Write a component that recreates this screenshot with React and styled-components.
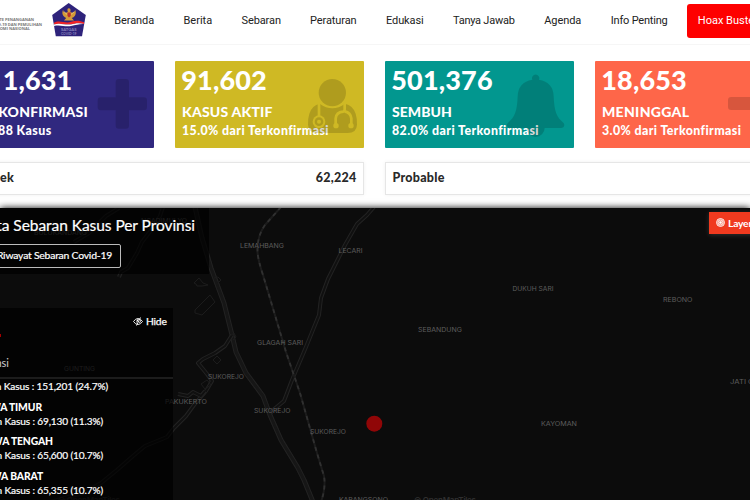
import React from "react";
import styled, { createGlobalStyle } from "styled-components";

const Global = createGlobalStyle`
  *, *::before, *::after { box-sizing: border-box; }
  html, body { margin: 0; padding: 0; }
  body { width: 750px; height: 500px; overflow: hidden; background: #fff; font-family: Lato, sans-serif; }
`;

const Page = styled.div`
  width: 750px;
  height: 500px;
  display: flex;
  flex-direction: column;
  overflow: hidden;
`;

/* Header */
const Header = styled.header`
  display: flex;
  align-items: flex-start;
  flex: none;
  height: 45px;
  border-bottom: 1px solid #f6f6f6;
`;
const BrandText = styled.div`
  flex: none;
  width: 43px;
  padding-top: 18px;
  display: flex;
  flex-direction: column;
  align-items: flex-start;
  font: 700 4px/4.5px "Open Sans", sans-serif;
  color: #777;
  white-space: nowrap;
`;
const BrandLine = styled.span`
  display: flex;
  justify-content: flex-end;
  width: ${(p) => p.$end}px;
`;
const Emblem = styled.svg`
  display: block;
  flex: none;
  width: 36px;
  height: 35px;
  margin: 2px 0 0 8px;
`;
const Nav = styled.nav`
  display: flex;
  flex: none;
  margin-left: 27.3px;
  height: 42px;
  align-items: center;
  font: 400 11px/14px Roboto, sans-serif;
  color: #222;
`;
const NavLink = styled.a`
  flex: none;
  width: ${(p) => p.$w}px;
  white-space: nowrap;
  letter-spacing: ${(p) => p.$ls || 0}px;
`;
const HoaxButton = styled.a`
  flex: none;
  width: 84px;
  height: 34px;
  margin-top: 4px;
  padding-left: 11px;
  border-radius: 3px;
  background: #fe0000;
  color: #fff;
  font: 400 11px/33px Roboto, sans-serif;
  white-space: nowrap;
`;

/* Statistics */
const Stats = styled.section`
  flex: none;
  width: 819px;
  height: 163px;
  margin-left: -35px;
  padding-top: 16px;
  display: flex;
  flex-direction: column;
  gap: 14px;
`;
const CardRow = styled.div`
  display: grid;
  grid-template-columns: repeat(4, 189px);
  gap: 21px;
`;
const Card = styled.article`
  position: relative;
  height: 87px;
  padding: 4px 0 0 7px;
  border-radius: 1px;
  background: ${(p) => p.$bg};
  color: #fff;
  font-weight: 900;
  white-space: nowrap;
`;
const Value = styled.div`
  margin-left: ${(p) => p.$shift || -0.7}px;
  font-size: 27px;
  line-height: 30px;
  letter-spacing: 0.15px;
`;
const Lead = styled.span`
  margin-right: 4px;
`;
const Label = styled.div`
  margin-top: 8px;
  font-size: 14px;
  line-height: 17px;
  letter-spacing: ${(p) => p.$ls || 0.2}px;
`;
const Share = styled.div`
  margin-top: 2px;
  font-size: 12.4px;
  line-height: 17px;
  letter-spacing: ${(p) => p.$ls || 0.4}px;
`;
const CardIcon = styled.svg`
  position: absolute;
  left: ${(p) => p.$x}px;
  top: ${(p) => p.$y}px;
  opacity: 0.15;
`;
const SummaryRow = styled.div`
  display: grid;
  grid-template-columns: repeat(2, 399px);
  gap: 21px;
`;
const Summary = styled.div`
  display: flex;
  justify-content: space-between;
  height: 33px;
  padding: 0 6.5px;
  border: 1px solid #e6e6e6;
  box-shadow: 0 0 4px rgba(0, 0, 0, 0.06);
  font-size: 12.5px;
  font-weight: 900;
  line-height: 29px;
  letter-spacing: 0.25px;
  color: #292929;
`;

/* Map */
const MapArea = styled.section`
  position: relative;
  flex: 1;
  background: #0c0c0c;
  box-shadow: 0 0 7px #000;
`;
const MapDrawing = styled.svg`
  position: absolute;
  inset: 0;
`;
const TitlePanel = styled.div`
  position: absolute;
  left: 0;
  top: 0;
  width: 209px;
  height: 66px;
  padding-top: 6px;
  background: rgba(0, 0, 0, 0.7);
  color: #fff;
`;
const EndRun = styled.div`
  display: flex;
  justify-content: flex-end;
  width: ${(p) => p.$end}px;
  white-space: nowrap;
`;
const Title = styled(EndRun)`
  font-size: 15.5px;
  line-height: 22px;
  letter-spacing: -0.05px;
  -webkit-text-stroke: 0.2px #fff;
`;
const HistoryButton = styled.button`
  display: flex;
  justify-content: flex-end;
  align-items: center;
  width: 151px;
  height: 24px;
  margin: 8px 0 0 -30px;
  padding: 0 8px 2px 0;
  border: 1px solid #bbb;
  border-radius: 2px;
  background: none;
  color: #fff;
  font: 400 10.4px/20px Lato, sans-serif;
  letter-spacing: -0.22px;
  white-space: nowrap;
  -webkit-text-stroke: 0.2px #fff;
`;
const ListPanel = styled.aside`
  position: absolute;
  left: 0;
  top: 100px;
  width: 173px;
  height: 192px;
  background: rgba(0, 0, 0, 0.7);
  color: #fff;
  overflow: hidden;
`;
const HideButton = styled.div`
  display: flex;
  align-items: center;
  gap: 3px;
  height: 14px;
  margin: 6px 0 0 133px;
  font-size: 10.3px;
  line-height: 14px;
  letter-spacing: -0.2px;
  -webkit-text-stroke: 0.25px #fff;
`;
const RedMark = styled.div`
  width: 1px;
  height: 3px;
  margin-top: 6px;
  background: #a50000;
`;
const ListHead = styled(EndRun)`
  height: 16px;
  margin-top: 18px;
  font-size: 11px;
  line-height: 16px;
  color: #ccc;
`;
const Rule = styled.div`
  height: 2px;
  margin-top: 6px;
  background: #1c1c1c;
`;
const Cases = styled(EndRun)`
  font-size: 10.1px;
  line-height: 14px;
  letter-spacing: -0.13px;
  -webkit-text-stroke: 0.2px #fff;
`;
const Province = styled(EndRun)`
  margin-top: 6.7px;
  font-size: 10.3px;
  font-weight: 900;
  line-height: 14px;
  letter-spacing: -0.1px;
`;
const LayerButton = styled.div`
  position: absolute;
  left: 709px;
  top: 4px;
  width: 60px;
  height: 22px;
  padding: 0 0 1px 7px;
  display: flex;
  align-items: center;
  gap: 3px;
  background: #f03a1f;
  box-shadow: 0 1px 5px rgba(255, 255, 255, 0.15);
  color: #fff;
  font-size: 10.3px;
  font-weight: 700;
  letter-spacing: -0.2px;
`;

const NAV = [
  ["Beranda", 69.2, -0.1],
  ["Berita", 58, 0],
  ["Sebaran", 68.5, -0.1],
  ["Peraturan", 76, -0.1],
  ["Edukasi", 67, -0.1],
  ["Tanya Jawab", 91.3, -0.25],
  ["Agenda", 66.5, -0.1],
  ["Info Penting", 76, -0.2],
];

/* [text, left, baseline, width] */
const PLACES = [
  ["LEMAHBANG", 240, 40, 44],
  ["LECARI", 338.5, 45, 24],
  ["DUKUH SARI", 512.5, 83, 41],
  ["REBONO", 663, 94, 29.5],
  ["GLAGAH SARI", 257, 136.5, 46],
  ["SEBANDUNG", 418, 123.5, 44],
  ["SUKOREJO", 208, 171, 36],
  ["PAKUKERTO", 165, 195.5, 42],
  ["SUKOREJO", 254, 205, 36.5],
  ["SUKOREJO", 310, 226, 36],
  ["KAYOMAN", 541, 218, 36],
  ["JATI GUNTING", 730, 176, 54],
  ["KARANGSONO", 339, 294, 49],
  ["GUNTING", 64, 162.5, 31],
  ["BULUKANDANG", 34, 27, 53],
  ["NGADIMULYO", 141, 15, 46],
];

const ROADS = [
  "M374 -1L367 7L357 16L345 37L328 71L321 90L319 107L306 139L292 172L284 193L273 202L269 207",
  "M195 -1L202 30L211 60L224 95L232 127L236 144L246 165L263 188L270 207L281 232L298 260L304 272L313 294",
  "M232 127L225 138L215 145L203 151L198 155L207 166L212 173L206 183L194 197L186 208L174 220L167 229L145 238L133 248L117 262L101 275L83 285L68 289L50 294",
  "M119 69L121 64L128 60L137 45L142 34L152 21L160 8L163 -1",
  "M74 34L89 25L106 8L119 0",
  "M178 186L188 188L193 184L201 188L205 183",
];
const OUTLINES = [
  "M195 102L210 87L215 94L202 107L195 105Z",
  "M194 75L199 70L203 75L208 77L202 78L197 78L196 76Z",
  "M213 152L217 148L221 152L217 156Z",
  "M201 176L207 172L211 177L205 181Z",
  "M230 128L234 125L236 129L233 132",
  "M214 70L218 69L221 72L218 75",
];
const RAILWAY =
  "M281 -1L265 17Q257 28 257.5 44Q258 52 263 67L286 144L300 185L317 245L324 268Q326 280 321 294";

function UserMd() {
  return (
    <CardIcon $x={132} $y={17} width="51" height="56" viewBox="171 84 153 168">
      <mask id="stethoscope">
        <rect x="171" y="84" width="153" height="168" fill="#fff" />
        <g fill="none" stroke="#000" strokeWidth="8">
          <path d="M207 156V203" />
          <path d="M284 156V178Q284 184 279 185Q259 187 257 205V224" />
          <path d="M284 184Q302 188 304 205V224" />
        </g>
        <circle cx="207" cy="215" r="19" fill="#000" />
        <circle cx="207" cy="215" r="13" fill="#fff" />
        <circle cx="207" cy="215" r="6" fill="#000" />
        <circle cx="258" cy="227" r="8" fill="#000" />
        <circle cx="303" cy="227" r="8" fill="#000" />
      </mask>
      <g mask="url(#stethoscope)">
        <circle cx="247" cy="128" r="41" />
        <path d="M209 161Q247 188 285 161Q309 166 317 191Q322 207 321 224Q320 249 293 249H202Q175 249 174 224Q173 207 178 191Q186 166 209 161Z" />
      </g>
    </CardIcon>
  );
}

function Bell() {
  return (
    <CardIcon $x={121} $y={13} width="60" height="64" viewBox="18 72 180 192">
      <path d="M97 89A11 11 0 1 1 117 89Q160 97 161 139C163 186 170 202 190 218C196 224 192 234 183 234H134A27 27 0 0 1 80 234H31C21 234 17 224 24 218C44 202 51 186 53 139Q54 97 97 89Z" />
    </CardIcon>
  );
}

function Garuda() {
  return (
    <Emblem viewBox="0 0 36 35">
      <path d="M17.7 1L1.2 13L4.8 34.2H31L34.8 13Z" fill="#2e237b" />
      <path d="M18 6.2Q16.3 6 16.4 8L16.8 10Q12.5 12 12 7.8Q10 13 13.8 15.2L15.2 16L13 18.5H23L20.8 16L22.5 15.2Q26 12.5 24.2 7.8Q23.4 12 19.3 10L19.6 8Q19.4 6.2 18 6.2Z" fill="#d49a38" />
      <path d="M13 9.7L16 12.4M23.3 9.7L20 12.4" stroke="#f4d77d" strokeWidth=".8" />
      <path d="M16.5 10.5H19.7V14L18 15.5L16.5 14Z" fill="#b92d2d" />
      <path d="M3 20.8C8 17.5 15 22 20 19.8C25 18 29 18.5 33 20.2V22C27 20.5 24 21.8 20 22.4C14 23.4 9 20.4 3 22.6Z" fill="#ef2428" />
      <path d="M3 22.6C9 20.4 14 23.4 20 22.4C24 21.8 27 20.5 33 22C28 21.8 25 23 20 24.1C14 25.2 9 22.3 3 24Z" fill="#fff" />
      <text x="10" y="29.4" fontFamily="Lato, sans-serif" fontSize="3.4" fontWeight="700" textLength="15.5" lengthAdjust="spacingAndGlyphs" fill="#8d86bb">SATGAS</text>
      <text x="10" y="32.6" fontFamily="Lato, sans-serif" fontSize="3.2" fontWeight="700" textLength="15.5" lengthAdjust="spacingAndGlyphs" fill="#8d86bb">COVID-19</text>
    </Emblem>
  );
}

function EyeSlash() {
  return (
    <svg width="10" height="9" viewBox="0 0 20 18" fill="none" stroke="#fff" strokeWidth="1.8">
      <path d="M1 9Q5 3 10 3Q15 3 19 9Q15 15 10 15Q5 15 1 9Z" />
      <path d="M10 4Q5.5 6 7.5 12L12 4Z" fill="#fff" stroke="none" />
      <path d="M15 1L7 17M13 12L16 6" />
    </svg>
  );
}

function Target() {
  return (
    <svg width="9" height="9" viewBox="0 0 18 18" fill="none" stroke="#fff">
      <circle cx="9" cy="9" r="8.5" fill="#fff" fillOpacity=".4" stroke="none" />
      <circle cx="9" cy="9" r="8" strokeWidth="1.5" />
      <circle cx="9" cy="9" r="5" strokeWidth="1.5" />
      <circle cx="9" cy="9" r="2.4" fill="#fff" stroke="none" />
    </svg>
  );
}

function BaseMap() {
  return (
    <MapDrawing width="750" height="292" viewBox="0 0 750 292">
      <g fill="none" strokeLinejoin="round">
        {ROADS.map((d, i) => (
          <g key={d}>
            <path d={d} stroke="#232323" strokeWidth={i === 1 ? 5 : 4} />
            <path d={d} stroke={i === 1 ? "#161616" : "#101010"} strokeWidth={i === 1 ? 3 : 2} />
          </g>
        ))}
        {OUTLINES.map((d) => (
          <path key={d} d={d} stroke="#1c1c1c" />
        ))}
        <path d={RAILWAY} stroke="#1c1c1c" strokeWidth="2" />
        <path d={RAILWAY} stroke="#303030" strokeWidth="1.8" strokeDasharray="4 4" />
      </g>
      <g fontFamily="Inter, sans-serif" fontSize="6.5" fill="#5e5e5e">
        {PLACES.map(([name, x, y, w]) => (
          <text key={name + x} x={x} y={y} textLength={w} lengthAdjust="spacingAndGlyphs">{name}</text>
        ))}
      </g>
      <g fontFamily="Inter, sans-serif" fontSize="8" fontWeight="600" fill="#303030">
        <text x="58" y="295" textLength="62">© OpenMapTiles</text>
        <text x="414" y="295" textLength="62">© OpenMapTiles</text>
      </g>
      <circle cx="374.3" cy="215.7" r="8" fill="#900607" />
    </MapDrawing>
  );
}

export default function App() {
  return (
    <Page>
      <Global />
      <Header>
        <BrandText>
          <BrandLine $end={34}>KOMITE PENANGANAN</BrandLine>
          <BrandLine $end={42}>COVID-19 DAN PEMULIHAN</BrandLine>
          <BrandLine $end={30}>EKONOMI NASIONAL</BrandLine>
        </BrandText>
        <Garuda />
        <Nav>
          {NAV.map(([text, w, ls]) => (
            <NavLink key={text} $w={w} $ls={ls}>{text}</NavLink>
          ))}
        </Nav>
        <HoaxButton>Hoax Buster</HoaxButton>
      </Header>

      <Stats>
        <CardRow>
          <Card $bg="#30287f">
            <Value $shift={-5}><Lead>61</Lead>1,631</Value>
            <Label>TERKONFIRMASI</Label>
            <Share>+4,188 Kasus</Share>
            <CardIcon $x={132} $y={17} width="51" height="51" viewBox="291 84 153 153">
              <path d="M356 87H378Q387 87 387 96V142H432Q441 142 441 151V172Q441 181 432 181H387V227Q387 236 378 236H356Q347 236 347 227V181H302Q293 181 293 172V151Q293 142 302 142H347V96Q347 87 356 87Z" />
            </CardIcon>
          </Card>
          <Card $bg="#cfb924">
            <Value>91,602</Value>
            <Label>KASUS AKTIF</Label>
            <Share>15.0% dari Terkonfirmasi</Share>
            <UserMd />
          </Card>
          <Card $bg="#02978f">
            <Value>501,376</Value>
            <Label $ls={0.05}>SEMBUH</Label>
            <Share>82.0% dari Terkonfirmasi</Share>
            <Bell />
          </Card>
          <Card $bg="#fe6649">
            <Value>18,653</Value>
            <Label $ls={0.3}>MENINGGAL</Label>
            <Share>3.0% dari Terkonfirmasi</Share>
            <CardIcon $x={133} $y={36} width="49" height="13" viewBox="0 0 49 13">
              <rect width="49" height="13" rx="3" />
            </CardIcon>
          </Card>
        </CardRow>
        <SummaryRow>
          <Summary><span>Suspek</span><span>62,224</span></Summary>
          <Summary><span>Probable</span></Summary>
        </SummaryRow>
      </Stats>

      <MapArea>
        <BaseMap />
        <TitlePanel>
          <Title $end={195}>Peta Sebaran Kasus Per Provinsi</Title>
          <HistoryButton>Riwayat Sebaran Covid-19</HistoryButton>
        </TitlePanel>
        <ListPanel>
          <HideButton><EyeSlash />Hide</HideButton>
          <RedMark />
          <ListHead $end={9}>Provinsi</ListHead>
          <Rule />
          <Cases $end={108}>Jumlah Kasus : 151,201 (24.7%)</Cases>
          <Province $end={42}>JAWA TIMUR</Province>
          <Cases $end={103}>Jumlah Kasus : 69,130 (11.3%)</Cases>
          <Province $end={53}>JAWA TENGAH</Province>
          <Cases $end={103}>Jumlah Kasus : 65,600 (10.7%)</Cases>
          <Province $end={43}>JAWA BARAT</Province>
          <Cases $end={103}>Jumlah Kasus : 65,355 (10.7%)</Cases>
        </ListPanel>
        <LayerButton><Target />Layer</LayerButton>
      </MapArea>
    </Page>
  );
}
